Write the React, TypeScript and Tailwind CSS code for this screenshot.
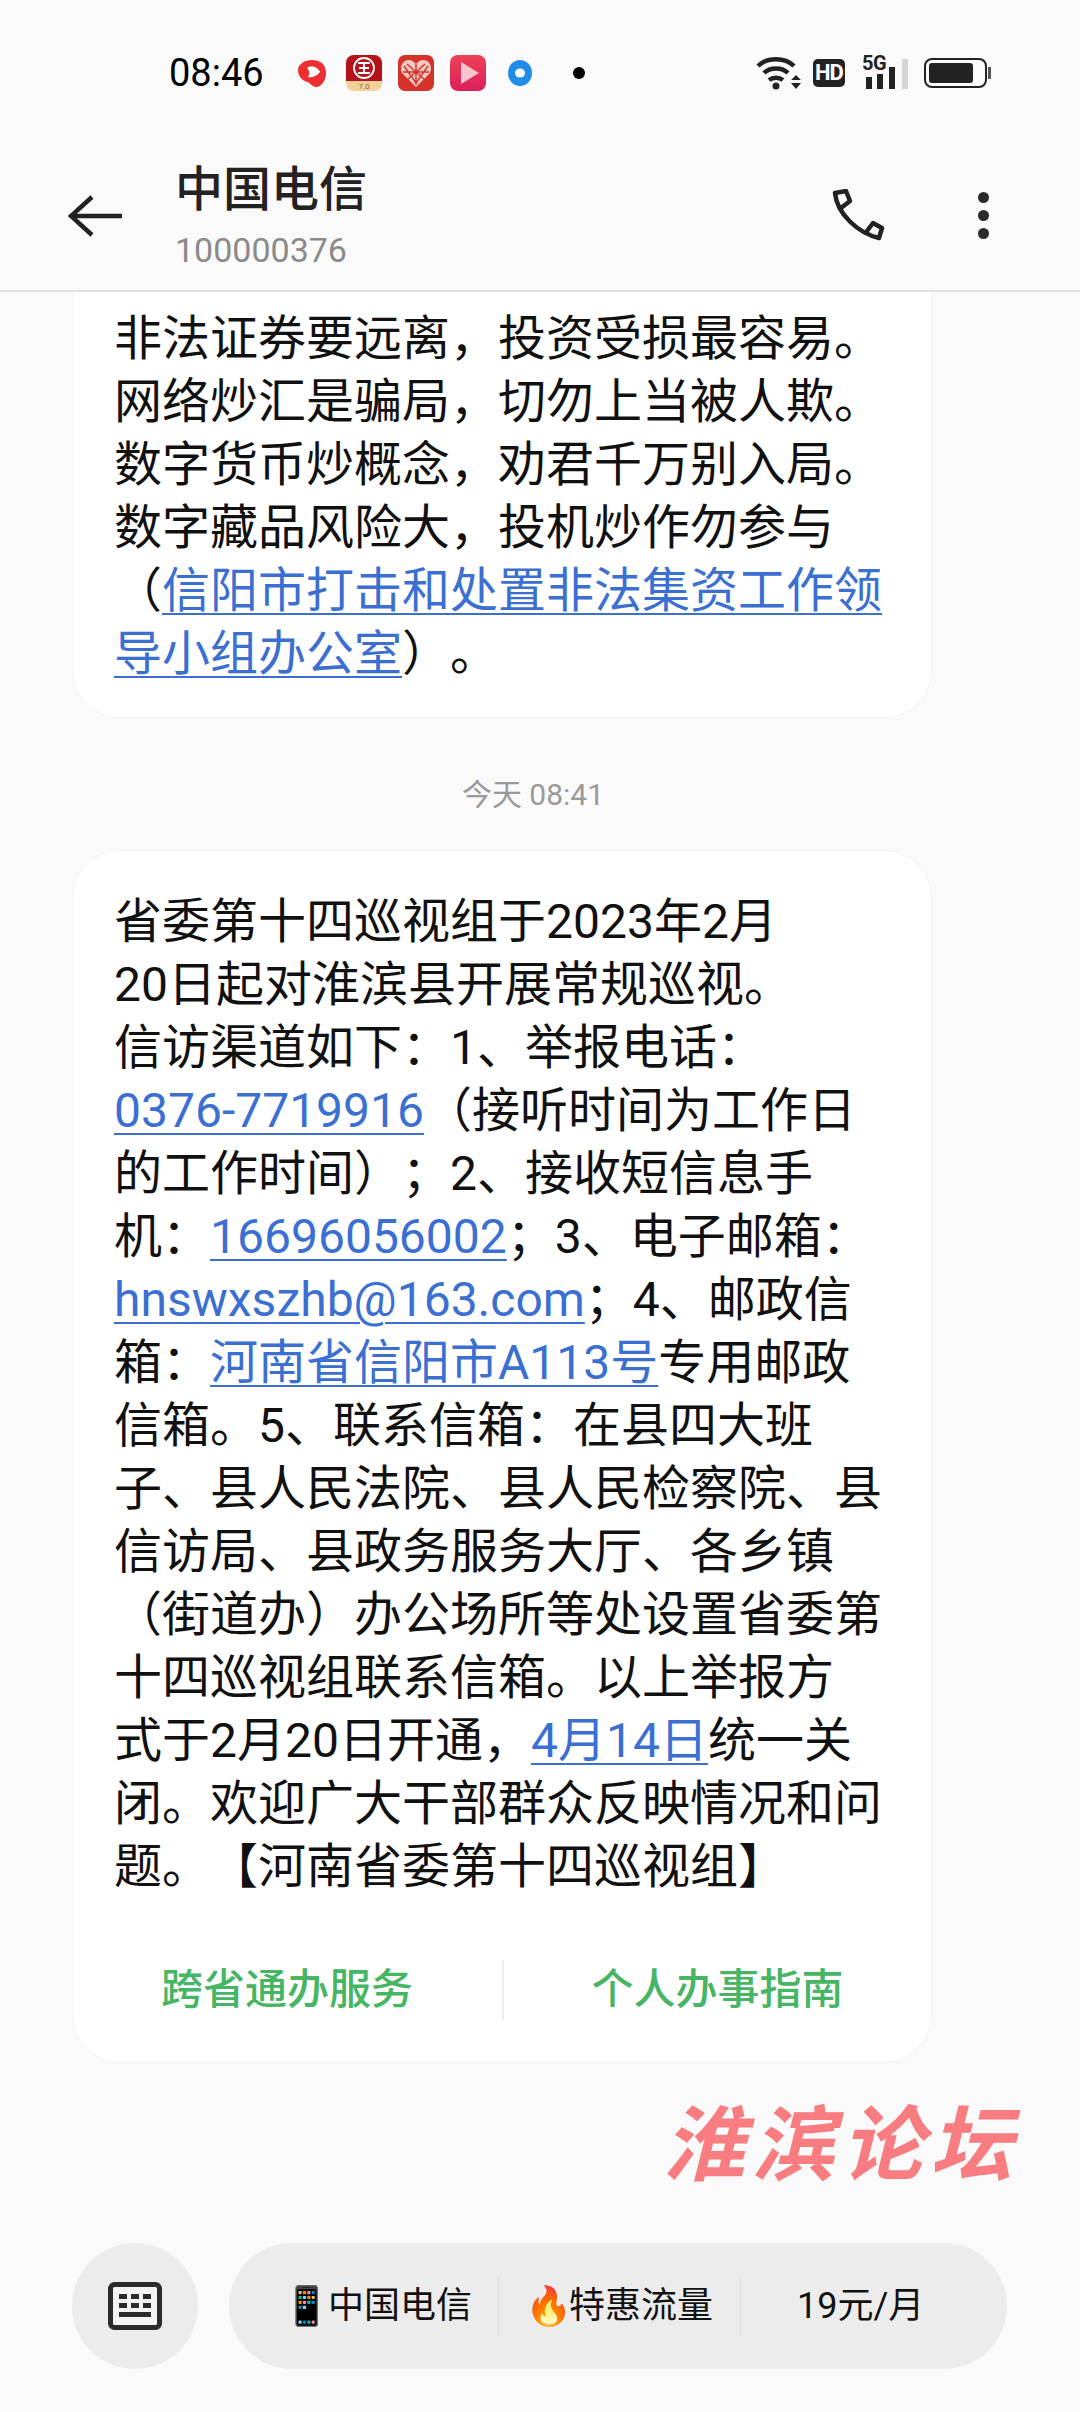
import React from 'react';

const sans = "font-['Roboto','Noto_Sans_CJK_SC',sans-serif]";

const Link = ({ children }: { children: React.ReactNode }) => (
  <span className="text-[#3b6fd1] underline underline-offset-[6px] decoration-2">{children}</span>
);

const AppIcons = () => (
  <div className="flex items-center ml-[30px] gap-[16px]">
    <svg width="36" height="36" viewBox="0 0 36 36">
      <path d="M18 5 C27 5 32 10 32 18 C32 26 27 32 22 32 C18 32 17 28 13 27 C7 25 4 20 4 15 C4 9 11 5 18 5 Z" fill="#ec2f33" />
      <path d="M13 13 C17 10 24 12 26 17 C23 21 18 23 14 22 C16 19 16 16 13 13 Z" fill="#fff" />
    </svg>
    <svg width="36" height="36" viewBox="0 0 36 36">
      <rect width="36" height="36" rx="8" fill="#f4d19a" />
      <path d="M0 8 a8 8 0 0 1 8 -8 h20 a8 8 0 0 1 8 8 v18 h-36 Z" fill="#b5121b" />
      <circle cx="18" cy="13" r="10" fill="none" stroke="#fff" strokeWidth="1.8" />
      <path d="M12 8 h12 M13 13 h10 M12 18 h12 M18 8 v10" stroke="#fff" strokeWidth="1.8" />
      <text x="18" y="34" textAnchor="middle" fontSize="8" fill="#8a6a3a" fontFamily="Roboto, sans-serif">7.0</text>
    </svg>
    <svg width="36" height="36" viewBox="0 0 36 36">
      <rect width="36" height="36" rx="7" fill="#d5332a" />
      <path d="M18 32 L4 18 C1 11 5 5 11 5 C14 5 16 7 18 9 C20 7 22 5 25 5 C31 5 35 11 32 18 Z" fill="#f6c9c0" />
      <path d="M9 9 L27 25 M27 9 L9 25 M18 9 V30 M5 17 H31 M6 11 L18 28 M30 11 L18 28" stroke="#d5332a" strokeWidth="1.4" />
    </svg>
    <svg width="36" height="36" viewBox="0 0 36 36">
      <defs>
        <linearGradient id="pb" x1="0" y1="0" x2="0" y2="1">
          <stop offset="0" stopColor="#ef4056" />
          <stop offset="1" stopColor="#d9205a" />
        </linearGradient>
      </defs>
      <rect width="36" height="36" rx="8" fill="url(#pb)" />
      <path d="M11 7 L29 18 L11 29 Z" fill="#f9c6cf" />
    </svg>
    <svg width="24" height="26" viewBox="0 0 24 26" className="mx-[6px]">
      <ellipse cx="12" cy="13" rx="12" ry="13" fill="#1f8de6" />
      <ellipse cx="12" cy="13" rx="5" ry="4.5" fill="#fff" />
    </svg>
    <div className="ml-[19px] w-[12px] h-[12px] rounded-full bg-black" />
  </div>
);

const SystemIcons = () => (
  <div className="flex items-center">
    <svg width="45" height="34" viewBox="0 0 45 34">
      <path d="M2 10 C11 1 29 1 38 10" fill="none" stroke="#222" strokeWidth="4.5" />
      <path d="M8 17 C14 11 26 11 32 17" fill="none" stroke="#222" strokeWidth="4.5" />
      <path d="M13 24 C17 21 23 21 27 24" fill="none" stroke="#222" strokeWidth="4.5" />
      <circle cx="20" cy="30" r="3.5" fill="#222" />
      <path d="M35 24 h10 l-5 -5 Z M35 27 h10 l-5 6 Z" fill="#222" />
    </svg>
    <div className="ml-[12px] w-[32px] h-[28px] rounded-[5px] bg-[#222] text-white text-[22px] leading-[28px] font-bold text-center font-['Roboto',sans-serif] tracking-[-1px]">HD</div>
    <div className="relative ml-[17px] w-[46px] h-[32px]">
      <span className="absolute left-0 top-[-4px] text-[20px] leading-[20px] font-bold text-[#222] font-['Roboto',sans-serif] tracking-[-0.5px]">5G</span>
      <div className="absolute left-[4px] bottom-0 w-[6px] h-[12px] bg-[#222]" />
      <div className="absolute left-[15px] bottom-0 w-[6px] h-[15px] bg-[#222]" />
      <div className="absolute left-[27px] bottom-0 w-[6px] h-[22px] bg-[#222]" />
      <div className="absolute left-[40px] bottom-0 w-[6px] h-[30px] bg-[#d5d5d5]" />
    </div>
    <div className="ml-[16px] flex items-center">
      <div className="w-[63px] h-[30px] rounded-[8px] border-[2.5px] border-[#222] p-[3px]">
        <div className="w-[44px] h-full rounded-[3px] bg-[#222]" />
      </div>
      <div className="ml-[1px] w-[3px] h-[12px] bg-[#555]" />
    </div>
  </div>
);

const StatusBar = () => (
  <div className="h-[142px] pt-[53px] pl-[169px] pr-[89px] flex items-start justify-between">
    <div className="flex items-center h-[40px]">
      <span className="text-[38px] leading-[40px] text-black font-['Roboto',sans-serif]">08:46</span>
      <AppIcons />
    </div>
    <div className="h-[40px] flex items-center">
      <SystemIcons />
    </div>
  </div>
);

const Header = () => (
  <div className="h-[150px] border-b-2 border-[#e2e2e2] flex items-start pl-[68px] pr-[91px]">
    <svg width="54" height="42" viewBox="0 0 54 42" className="mt-[53px]">
      <path d="M24 2 L3 21 L24 40 M3 21 H54" fill="none" stroke="#222" strokeWidth="4.500" />
    </svg>
    <div className="ml-[53px] flex-1 pt-[20px]">
      <div className={`${sans} text-[48px] leading-[56px] font-medium text-[#222]`}>中国电信</div>
      <div className="text-[34px] leading-[40px] mt-[12px] text-[#8a8a8a] font-['Roboto',sans-serif]">100000376</div>
    </div>
    <svg width="54" height="52" viewBox="0 0 54 52" className="mt-[47px] mr-[93px]">
      <path d="M4 4 C6 25 27 44 48 49 M4 4 L15 2 L19 12 L10 19 M36 42 L42 34 L51 39 L48 49" fill="none" stroke="#222" strokeWidth="4.500" strokeLinejoin="round" strokeLinecap="round" />
    </svg>
    <div className="mt-[50px] flex flex-col gap-[7px]">
      <div className="w-[11px] h-[11px] rounded-full bg-[#2a2a2a]" />
      <div className="w-[11px] h-[11px] rounded-full bg-[#2a2a2a]" />
      <div className="w-[11px] h-[11px] rounded-full bg-[#2a2a2a]" />
    </div>
  </div>
);

const Lines = ({ lines }: { lines: React.ReactNode[] }) => (
  <div className={`${sans} text-[48px] leading-[63px] text-[#111] whitespace-nowrap [text-spacing-trim:space-all]`}>
    {lines.map((l, i) => (
      <div key={i}>{l}</div>
    ))}
  </div>
);

const firstLines: React.ReactNode[] = [
  '非法证券要远离，投资受损最容易。',
  '网络炒汇是骗局，切勿上当被人欺。',
  '数字货币炒概念，劝君千万别入局。',
  '数字藏品风险大，投机炒作勿参与',
  <>（<Link>信阳市打击和处置非法集资工作领</Link></>,
  <><Link>导小组办公室</Link>）。</>,
];

const secondLines: React.ReactNode[] = [
  '省委第十四巡视组于2023年2月',
  '20日起对淮滨县开展常规巡视。',
  '信访渠道如下：1、举报电话：',
  <><Link>0376-7719916</Link>（接听时间为工作日</>,
  '的工作时间）；2、接收短信息手',
  <>机：<Link>16696056002</Link>；3、电子邮箱：</>,
  <><Link>hnswxszhb@163.com</Link>；4、邮政信</>,
  <>箱：<Link>河南省信阳市A113号</Link>专用邮政</>,
  '信箱。5、联系信箱：在县四大班',
  '子、县人民法院、县人民检察院、县',
  '信访局、县政务服务大厅、各乡镇',
  '（街道办）办公场所等处设置省委第',
  '十四巡视组联系信箱。以上举报方',
  <>式于2月20日开通，<Link>4月14日</Link>统一关</>,
  '闭。欢迎广大干部群众反映情况和问',
  '题。【河南省委第十四巡视组】',
];

const Card = ({ children, className }: { children: React.ReactNode; className: string }) => (
  <div className={`mx-[72px] w-[860px] bg-white border border-[#f3f3f3] ${className}`}>{children}</div>
);

const BottomBar = () => (
  <div className="flex items-center pl-[72px] mt-[180px]">
    <div className="w-[126px] h-[126px] rounded-full bg-[#ececec] flex items-center justify-center">
      <svg width="54" height="48" viewBox="0 0 54 48">
        <rect x="2.500" y="2.500" width="49" height="43" rx="4" fill="#f4f4f4" stroke="#2b2b2b" strokeWidth="5" />
        <path d="M11 12 h8 v5 h-8 Z M23 12 h8 v5 h-8 Z M35 12 h8 v5 h-8 Z M11 21 h8 v5 h-8 Z M23 21 h8 v5 h-8 Z M35 21 h8 v5 h-8 Z M11 30 h32 v5 h-32 Z" fill="#2b2b2b" />
      </svg>
    </div>
    <div className={`${sans} ml-[31px] w-[778px] h-[126px] rounded-full bg-[#ececec] flex items-center text-[36px] text-[#111]`}>
      <div className="w-[269px] pl-[54px] flex items-center whitespace-nowrap">
        <span className="text-[38px] leading-none w-[45px] text-center">📱</span>中国电信
      </div>
      <div className="w-px h-[60px] bg-[#e0e0e0]" />
      <div className="w-[241px] pl-[26px] flex items-center whitespace-nowrap">
        <span className="text-[38px] leading-none w-[44px] text-center">🔥</span>特惠流量
      </div>
      <div className="w-px h-[60px] bg-[#e0e0e0]" />
      <div className="flex-1 pl-[56px] whitespace-nowrap">19元/月</div>
    </div>
  </div>
);

export default function App() {
  return (
    <div className="w-[1080px] h-[2412px] bg-[#fafafa] overflow-hidden">
      <StatusBar />
      <Header />
      <Card className="h-[426px] rounded-b-[48px] border-t-0 pl-[41px] pt-[15px]">
        <Lines lines={firstLines} />
      </Card>
      <div className={`${sans} text-center text-[30px] leading-[40px] text-[#999] mt-[57px] pr-[14px]`}>今天 08:41</div>
      <Card className="mt-[35px] h-[1213px] rounded-[48px] pl-[41px] pt-[39px]">
        <Lines lines={secondLines} />
        <div className={`${sans} flex items-center mt-[62px] -ml-[42px] text-[42px] leading-[60px] font-medium text-[#46b564]`}>
          <div className="w-[430px] text-center">跨省通办服务</div>
          <div className="w-[2px] h-[60px] bg-[#eeeeee]" />
          <div className="flex-1 text-center">个人办事指南</div>
        </div>
      </Card>
      <div className="relative h-0">
        <div className="absolute left-[663px] top-[26px] font-['Noto_Sans_CJK_SC',sans-serif] text-[82px] leading-[100px] font-bold text-[#f97c80] tracking-[7px] italic whitespace-nowrap">淮滨论坛</div>
      </div>
      <BottomBar />
    </div>
  );
}
